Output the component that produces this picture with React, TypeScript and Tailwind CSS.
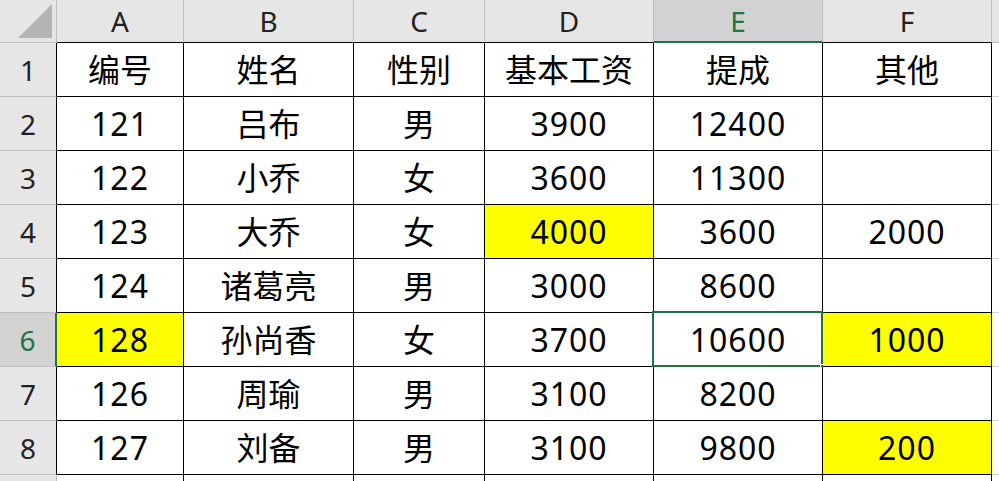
const cols = ["A", "B", "C", "D", "E", "F"];

const rows: (string | number)[][] = [
  ["编号", "姓名", "性别", "基本工资", "提成", "其他"],
  [121, "吕布", "男", 3900, 12400, ""],
  [122, "小乔", "女", 3600, 11300, ""],
  [123, "大乔", "女", 4000, 3600, 2000],
  [124, "诸葛亮", "男", 3000, 8600, ""],
  [128, "孙尚香", "女", 3700, 10600, 1000],
  [126, "周瑜", "男", 3100, 8200, ""],
  [127, "刘备", "男", 3100, 9800, 200],
];

// yellow fill cells, "row-col" with row index 0 = row 1
const yellow = new Set(["3-3", "5-0", "5-5", "7-5"]);

const font = { fontFamily: '"Noto Sans", "Noto Sans CJK SC", sans-serif' };

export default function App() {
  return (
    <div
      className="w-[999px] h-[481px] overflow-hidden bg-white text-black"
      style={font}
    >
      <div className="grid grid-cols-[57px_127px_170px_131px_169px_169px_169px_1fr] grid-rows-[43px_repeat(8,54px)_54px]">
        {/* corner */}
        <div className="relative bg-[#e6e6e6] border-r border-b border-[#bdbdbd]">
          <div className="absolute right-[4px] bottom-[4px] w-0 h-0 border-l-[34px] border-l-transparent border-b-[34px] border-b-[#b5b5b5]" />
        </div>
        {cols.map((c) => (
          <div
            key={c}
            className={
              c === "E"
                ? "flex items-center justify-center bg-[#d2d2d2] border-r border-[#bdbdbd] border-b-2 border-b-[#217346] text-[#217346] text-[28px] pt-[1px]"
                : "flex items-center justify-center bg-[#e6e6e6] border-r border-[#bdbdbd] border-b border-b-black text-[#222] text-[28px]"
            }
          >
            {c}
          </div>
        ))}
        <div className="bg-[#e6e6e6] border-b border-[#bdbdbd]" />

        {rows.map((r, i) => (
          <RowView key={i} r={r} i={i} />
        ))}

        {/* row 9, only its top edge is visible */}
        <div className="bg-[#e6e6e6] border-r border-[#bdbdbd]" />
        {cols.map((c) => (
          <div key={c} className="border-r border-black" />
        ))}
        <div />
      </div>
    </div>
  );
}

function RowView({ r, i }: { r: (string | number)[]; i: number }) {
  const active = i === 5;
  return (
    <>
      <div
        className={
          active
            ? "flex items-center justify-center bg-[#d2d2d2] border-b border-[#bdbdbd] border-r-2 border-r-[#217346] text-[#217346] text-[28px]"
            : "flex items-center justify-center bg-[#e6e6e6] border-b border-[#bdbdbd] border-r border-r-black text-[#222] text-[28px]"
        }
      >
        {i + 1}
      </div>
      {r.map((v, j) => {
        const fill = yellow.has(`${i}-${j}`);
        const selected = i === 5 && j === 4;
        const num = typeof v === "number";
        return (
          <div
            key={j}
            className={`relative flex items-center justify-center border-r border-b border-black leading-none ${
              num ? "text-[32px] tracking-[1px]" : "text-[32px]"
            } ${fill ? "bg-[#ffff00]" : "bg-white"}`}
          >
            {v}
            {selected && (
              <>
                <div className="absolute -left-[2px] -top-[2px] -right-[1px] -bottom-[1px] border-2 border-[#217346]" />
                <div className="absolute -right-[4px] -bottom-[4px] w-[6px] h-[6px] bg-[#217346] border border-white" />
              </>
            )}
          </div>
        );
      })}
      <div className="border-b border-[#d4d4d4] bg-white" />
    </>
  );
}
